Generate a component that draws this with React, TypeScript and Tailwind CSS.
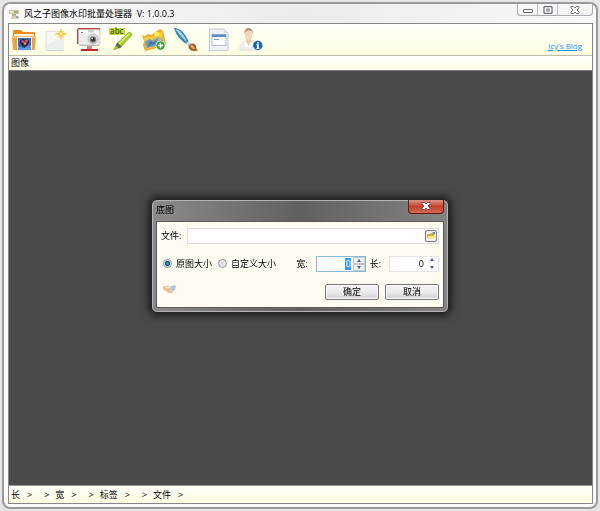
import React, { useState } from 'react';

interface SpinnerProps {
  id: string;
  label: string;
  active?: boolean;
}

function FolderIcon() {
  return (
    <svg viewBox="0 0 24 24" className="h-6 w-6">
      <path d="M1 3q0-1 1-1h7l2 2h11q1 0 1 1v14H1z" fill="#f08a1e" />
      <path d="M2 6h20v2H2z" fill="#fff2dc" />
      <path d="M0 8h24l-1 13q0 1-1 1H2q-1 0-1-1z" fill="#f79d3a" />
      <path d="M0 8h24v2H0z" fill="#fcbc6c" />
      <rect x="5" y="9" width="15" height="14" fill="#eef2f8" />
      <rect x="6" y="10" width="13" height="12" fill="#2f6cc4" />
      <path d="M6 18l5 2 8-3v5H6z" fill="#5a97de" />
      <path d="M8 14c0-3 3-3.500 4.500-2.500C14 10 17 11.500 17 14c0 3-3 4-4.500 6C11 18 8 17 8 14z" fill="#3a234f" />
      <circle cx="11" cy="13.500" r="1.600" fill="#c53a86" />
      <circle cx="14.500" cy="13" r="1.400" fill="#e25a3c" />
      <circle cx="13" cy="15.500" r="1.200" fill="#e8b23c" />
    </svg>
  );
}

function NewPageIcon() {
  return (
    <svg viewBox="0 0 24 24" className="h-6 w-6">
      <path d="M2 3.500h17v19H2z" fill="#f6f8f7" stroke="#d6dcdc" strokeWidth=".8" />
      <path d="M3 17L18 9v12.500H3z" fill="#e9eeee" />
      <path d="M3 22h16v1H3z" fill="#c9d0d0" />
      <path d="M17 0l1.300 4.700L24 6l-5.700 1.300L17 12l-1.300-4.700L10 6l5.700-1.300z" fill="#f7b91c" />
      <path d="M13.500 2.500L17 4.500l3.500-2-2 3.500 2 3.500-3.500-2-3.500 2 2-3.500z" fill="#fbd04a" />
      <circle cx="17" cy="6" r="1.500" fill="#fff3b0" />
    </svg>
  );
}

function CameraIcon() {
  return (
    <svg viewBox="0 0 24 24" className="h-6 w-6">
      <path d="M0 2q0-2 2-2h21v2H3v14H0z" fill="#c94040" />
      <path d="M2 16h20v2H2z" fill="#b9bcbe" />
      <path d="M10 18h5v3h-5z" fill="#c8898a" />
      <path d="M4 21h17v2H4z" fill="#c92630" />
      <rect x="1.500" y="1.500" width="21.500" height="15.500" rx="1" fill="#ececec" stroke="#c3c3c3" strokeWidth=".7" />
      <path d="M2.500 2.500h19.500v4H2.500z" fill="#fbfbfb" />
      <path d="M11 2h6v2.500h-6z" fill="#c9cdd0" />
      <path d="M4 4h2v1H4z" fill="#d05a5a" />
      <circle cx="16" cy="11" r="5" fill="#dcdddf" stroke="#a6a7aa" strokeWidth=".7" />
      <circle cx="16" cy="11.500" r="3.200" fill="#7a7d82" />
      <circle cx="16" cy="11.500" r="2" fill="#2b2d31" />
      <circle cx="15.200" cy="10.600" r=".8" fill="#fff" />
    </svg>
  );
}

function MarkerIcon() {
  return (
    <svg viewBox="0 0 24 24" className="h-6 w-6 overflow-visible">
      <rect x="0" y="0" width="16" height="7" fill="#c3dc34" />
      <text x="1" y="6" fontFamily="Open Sans, sans-serif" fontSize="8" fontWeight="600" fill="#4d5828">abc</text>
      <path d="M19.500 4.500q1-1 2 0l1 1q1 1 0 2L12 19l-4-3.500z" fill="#a9cc2b" stroke="#809b22" strokeWidth=".6" />
      <path d="M19.500 5.500L9.500 15.500l1 1L20.500 6.500z" fill="#e0f079" />
      <path d="M8 14.500l5 4.500-3 1.500L6.500 18z" fill="#5b6850" />
      <path d="M6.500 18l3 2.500L4 22.500z" fill="#95b82b" />
    </svg>
  );
}

function AddImageIcon() {
  return (
    <svg viewBox="0 0 24 24" className="h-6 w-6">
      <path d="M0 7l3 1 3-2 3 1L18 1l3 2 3 13-5 3-16 4-2-6 1-4z" fill="#f0a72c" />
      <path d="M2 10l4-2 3 1 11-6 2 12-5 3-13 3z" fill="#fccb45" />
      <path d="M2 13l5-2 3 1 6-4 2 2 4-1v5l-5 3-13 3z" fill="#c9b877" />
      <path d="M3 14l5-3 3 2 6-4-2 5 6-2-3 5-13 3z" fill="#6f98b4" />
      <path d="M7 14l3-1 1 2 3-3-1 4-7 2z" fill="#46789d" />
      <circle cx="14.500" cy="6" r="2.500" fill="#fff047" />
      <circle cx="18.500" cy="17.500" r="4.800" fill="#fff" />
      <circle cx="18.500" cy="17.500" r="4.200" fill="#22a331" />
      <path d="M17.700 14.800h1.600v1.900h1.900v1.600h-1.900v1.900h-1.600v-1.900h-1.900v-1.600h1.900z" fill="#fff" />
    </svg>
  );
}

function BrushIcon() {
  return (
    <svg viewBox="0 0 24 24" className="h-6 w-6">
      <path d="M0 0c4 0 8 2.500 10.500 6l4 7-3 2.500C6 11.500 2 7 0 0z" fill="#3f86ab" />
      <path d="M1.500 1C6 2 9 6 12.500 12.500l-.8.7C8 9 4 5.500 1.500 1z" fill="#a5d3e3" />
      <path d="M11.500 15.500l3-2.500 3.500 3-3 2.700z" fill="#b3b8bb" />
      <path d="M12.500 16l3-2.500 1 1-3 2.500z" fill="#f0f0f0" />
      <path d="M14.500 18.500L18 15.500c3 0 4.500 2.500 4 4 .3 1.500 1 2.300 2 3-4 1.200-9 .3-9.500-4z" fill="#a3552b" />
      <path d="M16.500 18l1.500-1c2 .5 2 3 3.500 4.200-2.500.3-4.500-1-5-3.200z" fill="#eeb257" />
    </svg>
  );
}

function DocumentIcon() {
  return (
    <svg viewBox="0 0 24 24" className="h-6 w-6">
      <path d="M2.500 1H17l4 4v17.500H2.500z" fill="#eef1f5" stroke="#b9c0c9" strokeWidth=".8" />
      <path d="M17 1v4h4z" fill="#d3dae1" />
      <rect x="5" y="6.500" width="14" height="11" fill="#fafcfe" stroke="#9db4d2" strokeWidth=".8" />
      <path d="M5 6.500h14v2.500H5z" fill="#5b8cc6" />
      <path d="M7 11h5v1H7z" fill="#8b9db5" />
    </svg>
  );
}

function PersonIcon() {
  return (
    <svg viewBox="0 0 24 24" className="h-6 w-6">
      <path d="M1 22c-.5-5 1-7 6-8.500h5c4 1.500 6 3.500 6 8.500z" fill="#eeeeef" stroke="#cbced0" strokeWidth=".6" />
      <path d="M7 11h5v3l-2.500 4L7 14z" fill="#eec7a4" />
      <path d="M5 14.500l2-1 2.500 5-3 1zM14 14.500l-2-1-2.500 5 3 1z" fill="#fff" />
      <ellipse cx="9.500" cy="6.800" rx="3.800" ry="5.800" fill="#f5d8bc" />
      <path d="M5.500 6.500C5 1.500 7.500 0 9.500 0s5 1.500 4.500 6.500c-.6-3-1.500-3.700-4-4-2.500 0-4 1-4.500 4z" fill="#b3977d" />
      <circle cx="18.800" cy="17.500" r="5.100" fill="#e3edf7" />
      <circle cx="18.800" cy="17.500" r="4.700" fill="#2065b5" />
      <path d="M18 14h1.800v1.500H18zM17.300 16.300h2.500v3.700h.7v1h-3.200v-1h.7v-2.700h-.7z" fill="#fff" />
    </svg>
  );
}

function LogoIcon() {
  return (
    <svg viewBox="0 0 12 12" className="h-3 w-3">
      <path d="M1 2h10v4H1z" fill="#cfc9ac" />
      <path d="M2 3h4v2H2z" fill="#e9e4c8" />
      <path d="M6 3h4v2H6z" fill="#a8a58c" />
      <path d="M4 6h4v3H4z" fill="#b6b19d" />
      <path d="M3 9l3-1 5 1v2H3z" fill="#dcd5bd" />
      <path d="M8 8h2v2H8z" fill="#93a0aa" />
    </svg>
  );
}

function HandsIcon() {
  return (
    <svg viewBox="0 0 14 12" className="h-3 w-3.5">
      <path d="M0 3q3-2 7-1l2 2-2 3-4 0-3-2z" fill="#f0c08c" />
      <path d="M8 2l4-1 1 2-1 3-3 1-2-2z" fill="#a3c8e6" />
      <path d="M3 6l5 1 3-1-2 3q-4 1-6-3z" fill="#e2bb98" />
      <path d="M2 3l5-1 1 2-5 0z" fill="#fbe3c4" />
    </svg>
  );
}

const TOOLS = [
  { name: '打开', icon: FolderIcon },
  { name: '新建', icon: NewPageIcon },
  { name: '预览', icon: CameraIcon },
  { name: '文字', icon: MarkerIcon },
  { name: '底图', icon: AddImageIcon },
  { name: '画笔', icon: BrushIcon },
  { name: '日志', icon: DocumentIcon },
  { name: '关于', icon: PersonIcon },
];

const STATUS_FIELDS = ['长', '宽', '标签', '文件'];

function TitleBar() {
  return (
    <header className="flex h-[19px] items-start justify-between bg-linear-to-r from-[#fafafa] via-[#ececec] to-[#f8f8f8]">
      <div className="flex h-[19px] items-center gap-1">
        <LogoIcon />
        <h1 className="whitespace-pre text-black">风之子图像水印批量处理器  V: 1.0.0.3</h1>
      </div>
      <div className="flex h-3 divide-x divide-[#b9bcc2] rounded-b border border-t-0 border-[#a9acb2] bg-[#f5f5f6]">
        <button aria-label="最小化" className="flex w-5 items-center justify-center">
          <svg viewBox="0 0 10 8" className="h-2 w-2.5">
            <rect x=".5" y="3.500" width="9" height="3" rx=".7" fill="#fff" stroke="#646878" />
          </svg>
        </button>
        <button aria-label="最大化" className="flex w-5 items-center justify-center">
          <svg viewBox="0 0 10 8" className="h-2 w-2.5">
            <rect x="1" y=".7" width="8" height="6.600" rx=".5" fill="#fff" stroke="#646878" strokeWidth="1.200" />
            <rect x="3.800" y="3" width="2.400" height="2" fill="#fff" stroke="#646878" strokeWidth=".9" />
          </svg>
        </button>
        <button aria-label="关闭" className="flex w-[34px] items-center justify-center">
          <svg viewBox="0 0 10 8" className="h-2 w-2.5">
            <path d="M1 .5h2.500L5 2 6.500.5H9V2L7 4l2 2v1.500H6.500L5 6 3.500 7.500H1V6l2-2-2-2z" fill="#fff" stroke="#646878" strokeWidth=".9" />
          </svg>
        </button>
      </div>
    </header>
  );
}

function Toolbar() {
  return (
    <nav className="flex h-[31px] items-center justify-between bg-linear-to-b from-[#fffff8] to-[#ffffe3] pr-2.5 pl-[3px]">
      <div className="flex w-[251px] justify-between">
        {TOOLS.map(({ name, icon: Icon }) => (
          <button key={name} aria-label={name}>
            <Icon />
          </button>
        ))}
      </div>
      <a href="#blog" className="self-end pb-[3px] text-[8px] text-[#1e90ff] underline">Icy's Blog</a>
    </nav>
  );
}

function StatusBar() {
  return (
    <footer className="flex h-[18px] items-center border-t border-[#999] bg-linear-to-b from-[#fffff9] to-[#ffffe5] px-0.5">
      {STATUS_FIELDS.map((field, i) => (
        <div key={field} className="flex">
          {i > 0 && <span className="mr-1.5 ml-3">&gt;</span>}
          <span>{field}</span>
          <span className="ml-[7px]">&gt;</span>
        </div>
      ))}
    </footer>
  );
}

function Spinner({ id, label, active = false }: SpinnerProps) {
  const [value, setValue] = useState(0);

  return (
    <div className="flex items-center gap-2">
      <label htmlFor={id}>{label}</label>
      <div className={`flex h-4 w-[50px] items-center border bg-white ${active ? 'border-[#8ab8dc]' : 'border-[#e4e5e8]'}`}>
        <input
          id={id}
          value={value}
          autoFocus={active}
          onFocus={(e) => e.target.select()}
          onChange={(e) => setValue(Number(e.target.value) || 0)}
          className="h-3 w-0 flex-1 pr-0.5 text-right outline-none selection:bg-[#3399ff] selection:text-white"
        />
        <div className={`flex w-3 flex-col ${active ? '' : 'gap-px'}`}>
          <button
            type="button"
            aria-label={`${label} 增加`}
            onClick={() => setValue(value + 1)}
            className={`flex h-[7px] items-center justify-center ${active ? 'border border-[#c3c6ca] bg-[#eff0f2]' : ''}`}
          >
            <svg viewBox="0 0 4 3" className="h-[3px] w-1"><path d="M0 3l2-3 2 3z" fill="#4c5a92" /></svg>
          </button>
          <button
            type="button"
            aria-label={`${label} 减少`}
            onClick={() => setValue(Math.max(0, value - 1))}
            className={`flex h-[7px] items-center justify-center ${active ? 'border border-[#c3c6ca] bg-[#eff0f2]' : ''}`}
          >
            <svg viewBox="0 0 4 3" className="h-[3px] w-1"><path d="M0 0l2 3 2-3z" fill="#4c5a92" /></svg>
          </button>
        </div>
      </div>
    </div>
  );
}

function SizeOption({ label, defaultChecked = false }: { label: string; defaultChecked?: boolean }) {
  return (
    <label className="flex items-center gap-1">
      <input
        type="radio"
        name="size"
        defaultChecked={defaultChecked}
        className="h-[9px] w-[9px] appearance-none rounded-full border border-[#8e9297] bg-radial from-[#d5d8da] to-[#f4f4f4] checked:from-[#37a8d8] checked:from-10% checked:via-[#14506f] checked:via-45% checked:to-[#eef1f3] checked:to-60%"
      />
      {label}
    </label>
  );
}

function WatermarkDialog() {
  return (
    <section
      role="dialog"
      aria-labelledby="dialog-title"
      className="w-[298px] rounded-md border border-[#262626] bg-linear-to-r from-[#8c8c8c] via-[#606060] to-[#848484] px-1 pb-1 shadow-[0_0_8px_2px_rgba(0,0,0,0.75)] inset-ring inset-ring-[#b4b4b4]"
    >
      <header className="flex h-[21px] items-start justify-between">
        <h2 id="dialog-title" className="pt-1 text-black">底图</h2>
        <button aria-label="关闭" className="flex h-3.5 w-9 items-center justify-center rounded-b-sm border border-t-0 border-[#611c16] bg-linear-to-b from-[#dc9287] via-[#c23f2c] to-[#d36b50]">
          <svg viewBox="0 0 10 8" className="h-2 w-2.5">
            <path d="M1 .5h2.500L5 2 6.500.5H9V2L7 4l2 2v1.500H6.500L5 6 3.500 7.500H1V6l2-2-2-2z" fill="#fff" stroke="#663c3c" strokeWidth=".8" />
          </svg>
        </button>
      </header>
      <form onSubmit={(e) => e.preventDefault()} className="flex flex-col border border-[#5a5a5a] bg-[#fffbf2] px-1 pt-1.5 pb-[7px]">
        <div className="flex items-center gap-1.5">
          <label htmlFor="file">文件:</label>
          <div className="flex h-4 flex-1 items-center border border-[#dcdee0] bg-white pr-px">
            <input id="file" className="h-3 min-w-0 flex-1 px-1 outline-none" />
            <button type="button" aria-label="浏览" className="flex h-3 w-3 items-center justify-center rounded-xs border border-[#777b80] bg-[#f5f5f5]">
              <svg viewBox="0 0 8 8" className="h-2 w-2">
                <path d="M0 2h3l1-1h3v6H0z" fill="#d8a83a" />
                <path d="M1 4h7l-1 3H0z" fill="#ffe58c" />
                <path d="M5 0h3v3L7 2z" fill="#4b84c4" />
              </svg>
            </button>
          </div>
        </div>
        <div className="mt-3 flex items-center justify-between pl-0.5">
          <div className="flex gap-1.5">
            <SizeOption label="原图大小" defaultChecked />
            <SizeOption label="自定义大小" />
          </div>
          <div className="flex gap-1">
            <Spinner id="width" label="宽:" active />
            <Spinner id="height" label="长:" />
          </div>
        </div>
        <div className="mt-3 flex items-start justify-between pl-0.5">
          <HandsIcon />
          <div className="flex gap-1.5">
            <button type="submit" className="h-4 w-[54px] rounded-xs border border-[#777] bg-linear-to-b from-[#f3f3f3] via-[#ebebeb] to-[#d0d0d0] inset-ring inset-ring-[#fafafa]">确定</button>
            <button type="button" className="h-4 w-[54px] rounded-xs border border-[#777] bg-linear-to-b from-[#f3f3f3] via-[#ebebeb] to-[#d0d0d0] inset-ring inset-ring-[#fafafa]">取消</button>
          </div>
        </div>
      </form>
    </section>
  );
}

export default function App() {
  return (
    <div className="flex h-screen bg-[#e6e6e6] p-0.5 font-['Open_Sans','Noto_Sans_CJK_SC',sans-serif] text-[9px] leading-3 text-black">
      <div className="flex flex-1 flex-col rounded-lg border-2 border-[#9a9a9a] bg-[#f9f9f9] pr-[3px] pb-[3px] pl-1">
        <TitleBar />
        <main className="flex flex-1 flex-col border border-[#888]">
          <Toolbar />
          <div className="border-t border-[#bcbcab] bg-linear-to-b from-[#fffff9] to-[#ffffe5] px-0.5 py-px">图像</div>
          <div className="flex-1 border-t border-[#777] bg-[#4a4a4a]" />
          <StatusBar />
        </main>
      </div>
      <div className="fixed inset-0 flex items-center justify-center">
        <WatermarkDialog />
      </div>
    </div>
  );
}
